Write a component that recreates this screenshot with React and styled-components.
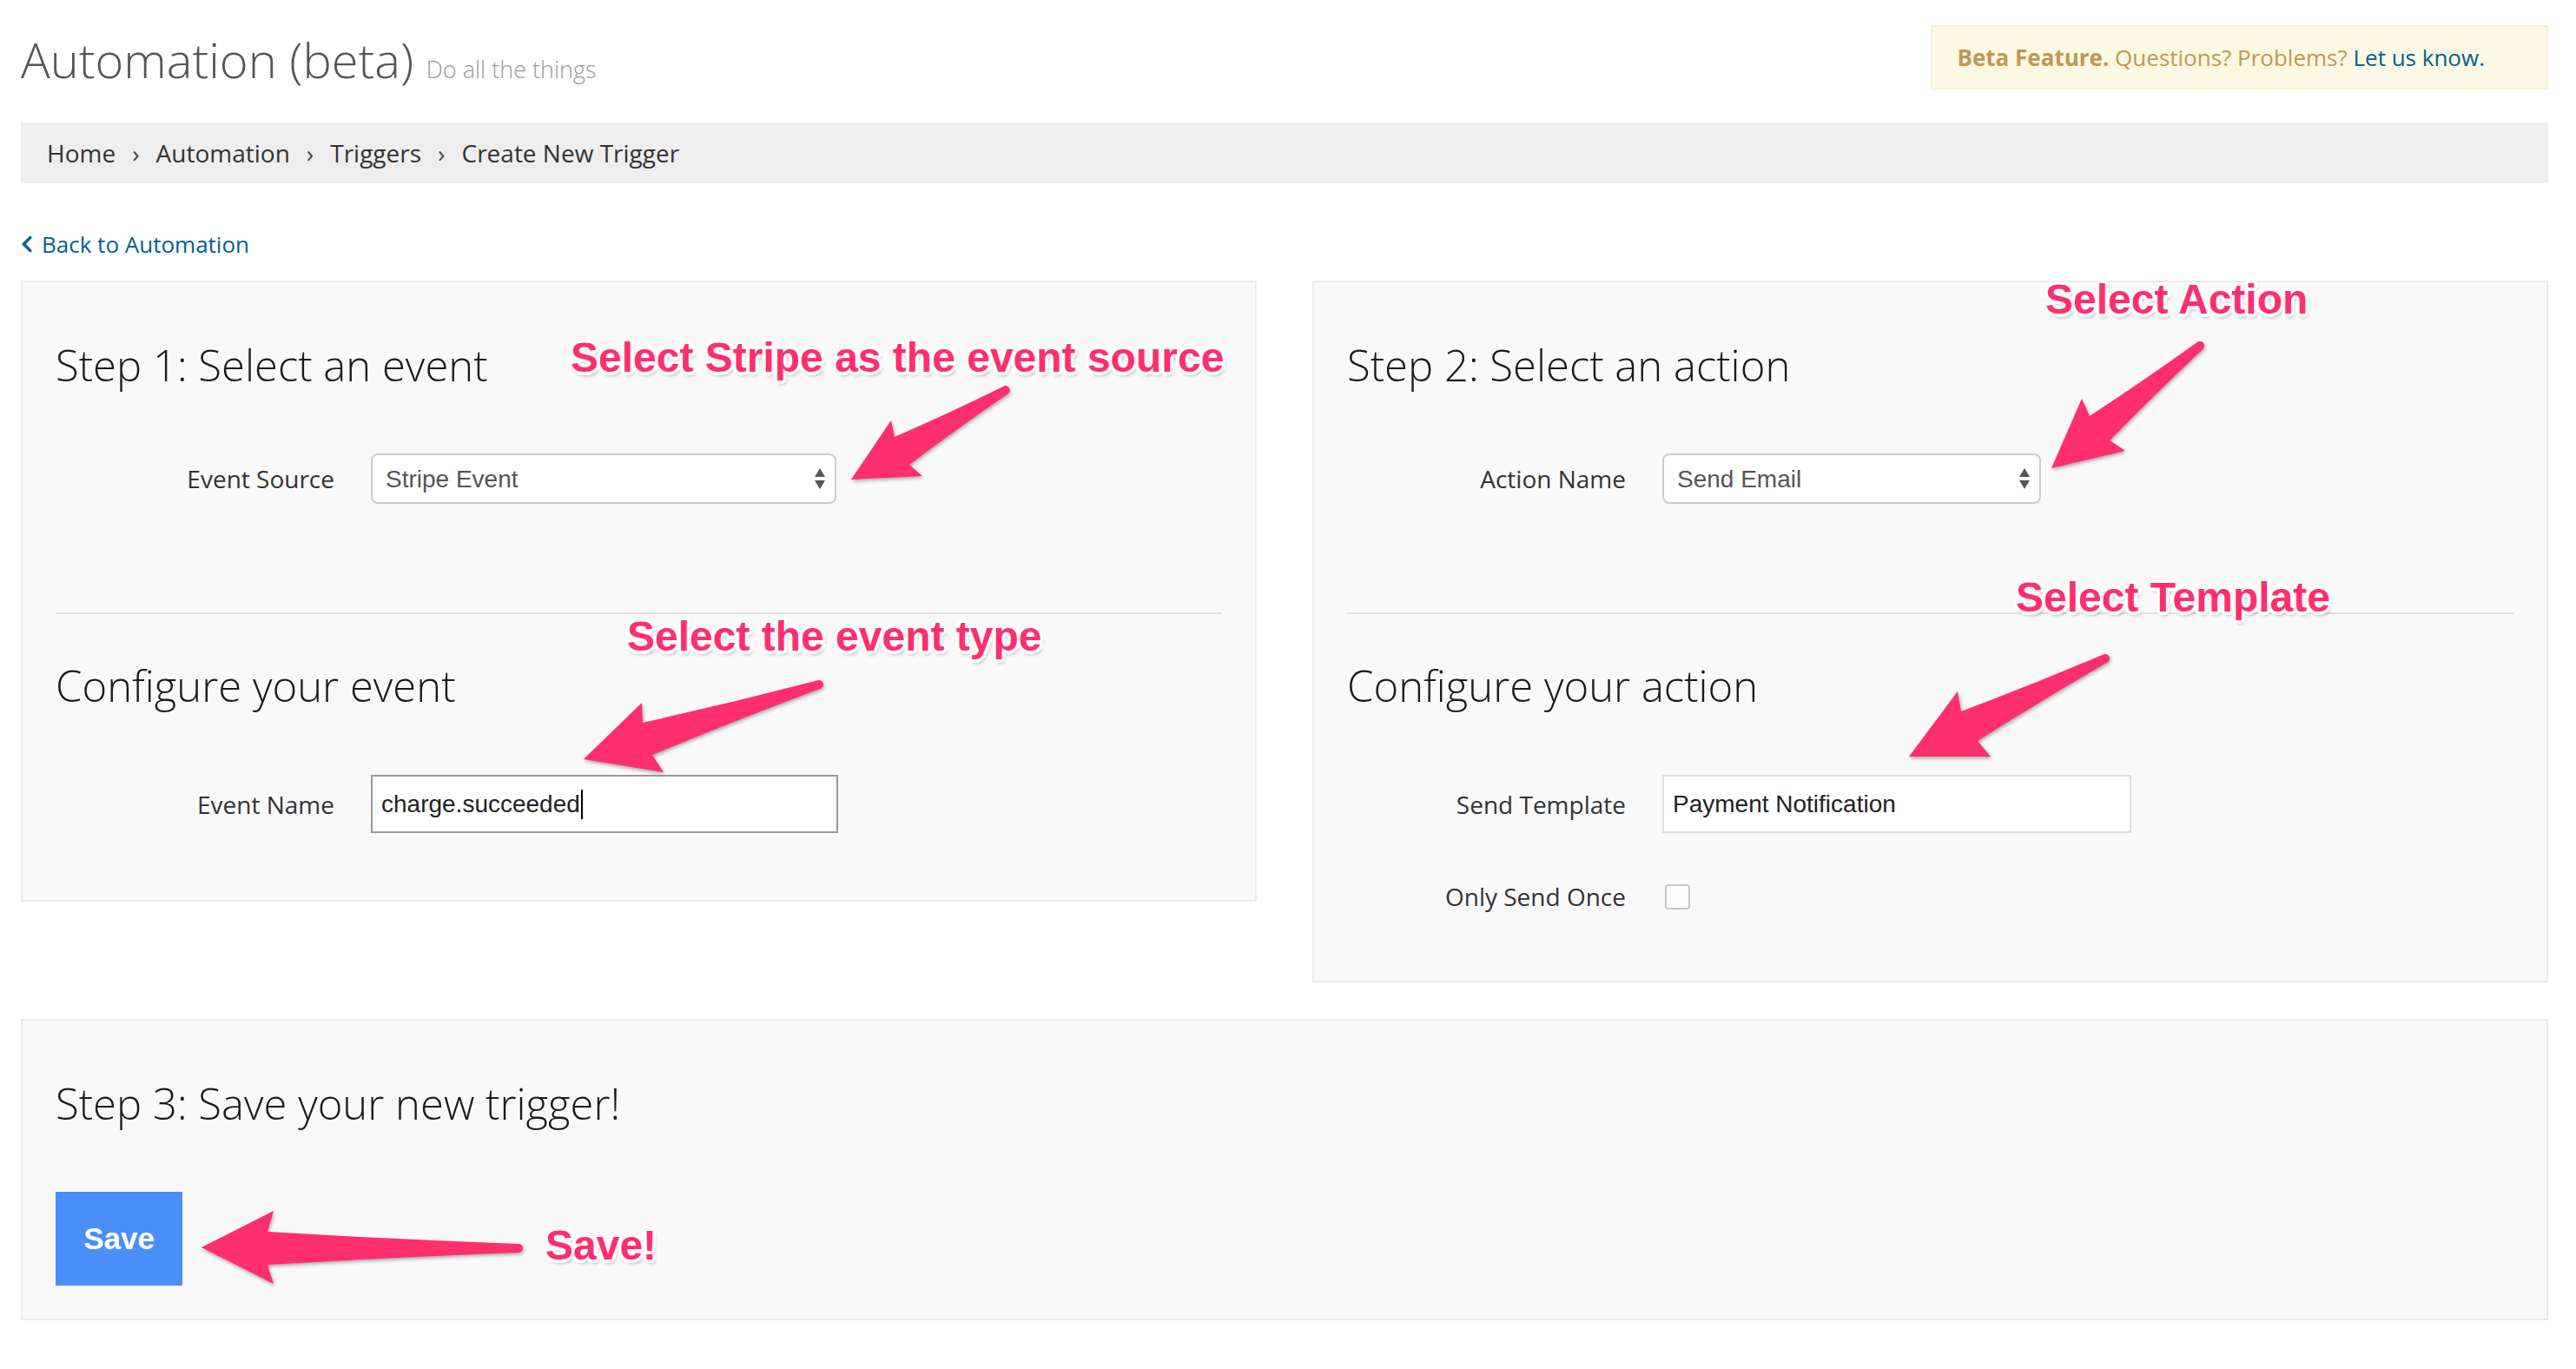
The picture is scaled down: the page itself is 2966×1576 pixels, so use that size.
import React from 'react'
import styled, { createGlobalStyle } from 'styled-components'
import { FaChevronLeft } from 'react-icons/fa'

const GlobalStyle = createGlobalStyle`
  html, body {
    margin: 0;
    padding: 0;
    background: #fff;
  }
  body {
    font-family: "Open Sans", "Liberation Sans", Arial, sans-serif;
    color: #333;
  }
  * { box-sizing: border-box; }
`

// white outline + soft shadow, like the skitch labels
const ring = []
for (let a = 0; a < 360; a += 30) {
  const r = (a * Math.PI) / 180
  ring.push(`${(Math.cos(r) * 3.5).toFixed(1)}px ${(Math.sin(r) * 3.5).toFixed(1)}px 0 #fff`)
}
const noteShadow = ring.join(', ') + ', 2px 4px 4px rgba(0,0,0,0.35)'

const Page = styled.div`
  position: relative;
  width: 2966px;
  min-height: 1576px;
  padding: 29px 32px 0 24px;
`

const Header = styled.header`
  display: flex;
  justify-content: space-between;
  align-items: flex-start;
  height: 76px;
`

const Title = styled.h1`
  margin: 1px 0 0;
  font-size: 56px;
  line-height: 76px;
  font-weight: 300;
  color: #555;

  small {
    font-size: 27px;
    line-height: 1;
    font-weight: 300;
    color: #999;
  }
`

const BetaAlert = styled.div`
  padding: 15px 71px 15px 28px;
  border: 2px solid #fbeed5;
  background: #fcf8e3;
  color: #c09853;
  font-size: 26px;
  line-height: 40px;

  strong { font-weight: 700; }
  a {
    color: #00628f;
    text-decoration: none;
  }
`

const Breadcrumb = styled.nav`
  margin-top: 36px;
  height: 70px;
  padding: 0 30px;
  display: flex;
  align-items: center;
  background: #eee;
  font-size: 28px;
  line-height: 38px;
  color: #333;
`

const Sep = styled.span`
  padding: 0 19px;
  color: #444;
`

const BackRow = styled.div`
  margin-top: 50px;
  line-height: 40px;
`

const BackLink = styled.a`
  display: inline-flex;
  align-items: center;
  gap: 10px;
  font-size: 26px;
  color: #00628f;
  text-decoration: none;

  svg {
    width: 14px;
    height: 22px;
  }
`

const StepGrid = styled.div`
  display: grid;
  grid-template-columns: 1fr 1fr;
  column-gap: 64px;
  align-items: start;
  margin-top: 17px;
`

const Panel = styled.section`
  margin-top: ${p => p.$top || 0}px;
  padding: 69px 38px ${p => p.$bottom}px;
  background: #f9f9f9;
  border: 2px solid #ebebeb;
`

const StepTitle = styled.h3`
  margin: ${p => p.$top || 0}px 0 0;
  font-size: 49px;
  line-height: 53px;
  font-weight: 300;
  color: #1a1a1a;
`

const Divider = styled.hr`
  margin: 125px 0 0;
  border: 0;
  height: 2px;
  background: #e2e2e2;
`

const FormRow = styled.div`
  display: grid;
  grid-template-columns: 321px 1fr;
  column-gap: 42px;
  align-items: center;
  margin-top: ${p => p.$gap}px;
`

const Label = styled.label`
  text-align: right;
  font-size: 28px;
  line-height: 40px;
  color: #333;
`

const SelectWrap = styled.div`
  position: relative;
  width: ${p => p.$w}px;
  height: 58px;
`

const Select = styled.select`
  appearance: none;
  width: 100%;
  height: 100%;
  padding: 0 40px 0 15px;
  border: 2px solid #ccc;
  border-radius: 8px;
  background: #fff;
  font: 28px "Liberation Sans", Arial, sans-serif;
  color: #555;
`

const SelectArrows = styled.svg`
  position: absolute;
  right: 13px;
  top: 17px;
  width: 12px;
  height: 24px;
  pointer-events: none;
`

const Field = styled.div`
  width: ${p => p.$w}px;
  height: 67px;
  display: flex;
  align-items: center;
  padding: 0 10px;
  background: #fff;
  border: 2px solid ${p => (p.$focused ? '#9a9a9a' : '#dedede')};
  font: 28px "Liberation Sans", Arial, sans-serif;
  color: #222;
`

const Caret = styled.span`
  display: inline-block;
  width: 2px;
  height: 34px;
  margin-left: 1px;
  background: #000;
`

const Checkbox = styled.span`
  display: block;
  width: 29px;
  height: 29px;
  margin-left: 3px;
  border: 2px solid #c6c6c6;
  border-radius: 4px;
  background: #fdfdfd;
`

const SaveButton = styled.button`
  display: block;
  margin-top: 75px;
  width: 146px;
  height: 108px;
  border: 0;
  background: #4a8efa;
  color: #fff;
  font: 700 35px "Liberation Sans", Arial, sans-serif;
`

const Overlay = styled.div`
  position: absolute;
  inset: 0;
  pointer-events: none;
`

const ArrowLayer = styled.svg`
  position: absolute;
  left: 0;
  top: 0;
  width: 2966px;
  height: 1576px;
  filter: drop-shadow(1px 2px 2px rgba(0, 0, 0, 0.35));
`

const Note = styled.div`
  position: absolute;
  left: ${p => p.$x}px;
  top: ${p => p.$y}px;
  font: 700 48px/48px "Liberation Sans", Arial, sans-serif;
  color: #ff2e6e;
  white-space: nowrap;
  text-shadow: ${noteShadow};
`

const mid = (a, b) => [(a[0] + b[0]) / 2, (a[1] + b[1]) / 2]
const lerp = (a, b, t) => [a[0] + (b[0] - a[0]) * t, a[1] + (b[1] - a[1]) * t]
const pt = p => `${p[0].toFixed(1)} ${p[1].toFixed(1)}`

function arrowPath({ tail, r = 5, notchU, barbU, tip, barbL, notchL }) {
  const dx = tail[0] - tip[0]
  const dy = tail[1] - tip[1]
  const len = Math.hypot(dx, dy)
  const u = [dx / len, dy / len]
  let n = [-u[1], u[0]]
  if ((barbU[0] - tip[0]) * n[0] + (barbU[1] - tip[1]) * n[1] < 0) n = [u[1], -u[0]]
  const tTop = [tail[0] + n[0] * r, tail[1] + n[1] * r]
  const tBot = [tail[0] - n[0] * r, tail[1] - n[1] * r]
  const axisMid = lerp(mid(notchU, notchL), tail, 0.5)
  const cU = lerp(mid(notchU, tTop), axisMid, 0.15)
  const cL = lerp(mid(notchL, tBot), axisMid, 0.15)
  const sweep = u[0] * n[1] - u[1] * n[0] > 0 ? 1 : 0
  return `M${pt(notchU)} L${pt(barbU)} L${pt(tip)} L${pt(barbL)} L${pt(notchL)} Q${pt(cL)} ${pt(tBot)} A${r} ${r} 0 0 ${sweep} ${pt(tTop)} Q${pt(cU)} ${pt(notchU)} Z`
}

const arrows = [
  { tail: [1158, 449], notchU: [1030, 503], barbU: [1026, 484], tip: [980, 552], barbL: [1062, 548], notchL: [1047, 535] },
  { tail: [943, 788], notchU: [740, 832], barbU: [739, 809], tip: [672, 874], barbL: [764, 889], notchL: [751, 869] },
  { tail: [2533, 398], notchU: [2406, 479], barbU: [2397, 459], tip: [2362, 539], barbL: [2447, 519], notchL: [2429, 507] },
  { tail: [2424, 758], notchU: [2258, 819], barbU: [2254, 796], tip: [2198, 871], barbL: [2292, 871], notchL: [2277, 853] },
  { tail: [597, 1437], notchU: [308, 1418], barbU: [315, 1394], tip: [232, 1436], barbL: [315, 1478], notchL: [308, 1456] },
]

const notes = [
  { x: 657, y: 388, text: 'Select Stripe as the event source' },
  { x: 722, y: 709, text: 'Select the event type' },
  { x: 2355, y: 321, text: 'Select Action' },
  { x: 2321, y: 664, text: 'Select Template' },
  { x: 628, y: 1410, text: 'Save!' },
]

const Arrows = () => (
  <SelectArrows viewBox="0 0 12 24">
    <polygon points="0,10 6,0 12,10" fill="#555" />
    <polygon points="0,14 12,14 6,24" fill="#555" />
  </SelectArrows>
)

const App = () => {
  return (
    <>
      <GlobalStyle />
      <Page>
        <Header>
          <Title>
            Automation (beta) <small>Do all the things</small>
          </Title>
          <BetaAlert>
            <strong>Beta Feature.</strong> Questions? Problems? <a href="#">Let us know.</a>
          </BetaAlert>
        </Header>

        <Breadcrumb>
          <span>Home</span>
          <Sep>›</Sep>
          <span>Automation</span>
          <Sep>›</Sep>
          <span>Triggers</span>
          <Sep>›</Sep>
          <span>Create New Trigger</span>
        </Breadcrumb>

        <BackRow>
          <BackLink href="#">
            <FaChevronLeft />
            Back to Automation
          </BackLink>
        </BackRow>

        <StepGrid>
          <Panel $bottom={77}>
            <StepTitle>Step 1: Select an event</StepTitle>
            <FormRow $gap={75}>
              <Label>Event Source</Label>
              <SelectWrap $w={536}>
                <Select defaultValue="stripe">
                  <option value="stripe">Stripe Event</option>
                </Select>
                <Arrows />
              </SelectWrap>
            </FormRow>
            <Divider />
            <StepTitle $top={56}>Configure your event</StepTitle>
            <FormRow $gap={76}>
              <Label>Event Name</Label>
              <Field $w={538} $focused>
                charge.succeeded
                <Caret />
              </Field>
            </FormRow>
          </Panel>

          <Panel $bottom={77}>
            <StepTitle>Step 2: Select an action</StepTitle>
            <FormRow $gap={75}>
              <Label>Action Name</Label>
              <SelectWrap $w={436}>
                <Select defaultValue="email">
                  <option value="email">Send Email</option>
                </Select>
                <Arrows />
              </SelectWrap>
            </FormRow>
            <Divider />
            <StepTitle $top={56}>Configure your action</StepTitle>
            <FormRow $gap={76}>
              <Label>Send Template</Label>
              <Field $w={540}>Payment Notification</Field>
            </FormRow>
            <FormRow $gap={53}>
              <Label>Only Send Once</Label>
              <Checkbox />
            </FormRow>
          </Panel>
        </StepGrid>

        <Panel $top={42} $bottom={38}>
          <StepTitle>Step 3: Save your new trigger!</StepTitle>
          <SaveButton>Save</SaveButton>
        </Panel>

        <Overlay>
          <ArrowLayer viewBox="0 0 2966 1576">
            {arrows.map((a, i) => (
              <path key={i} d={arrowPath(a)} fill="#ff2e6e" />
            ))}
          </ArrowLayer>
          {notes.map(n => (
            <Note key={n.text} $x={n.x} $y={n.y}>
              {n.text}
            </Note>
          ))}
        </Overlay>
      </Page>
    </>
  )
}

export default App
